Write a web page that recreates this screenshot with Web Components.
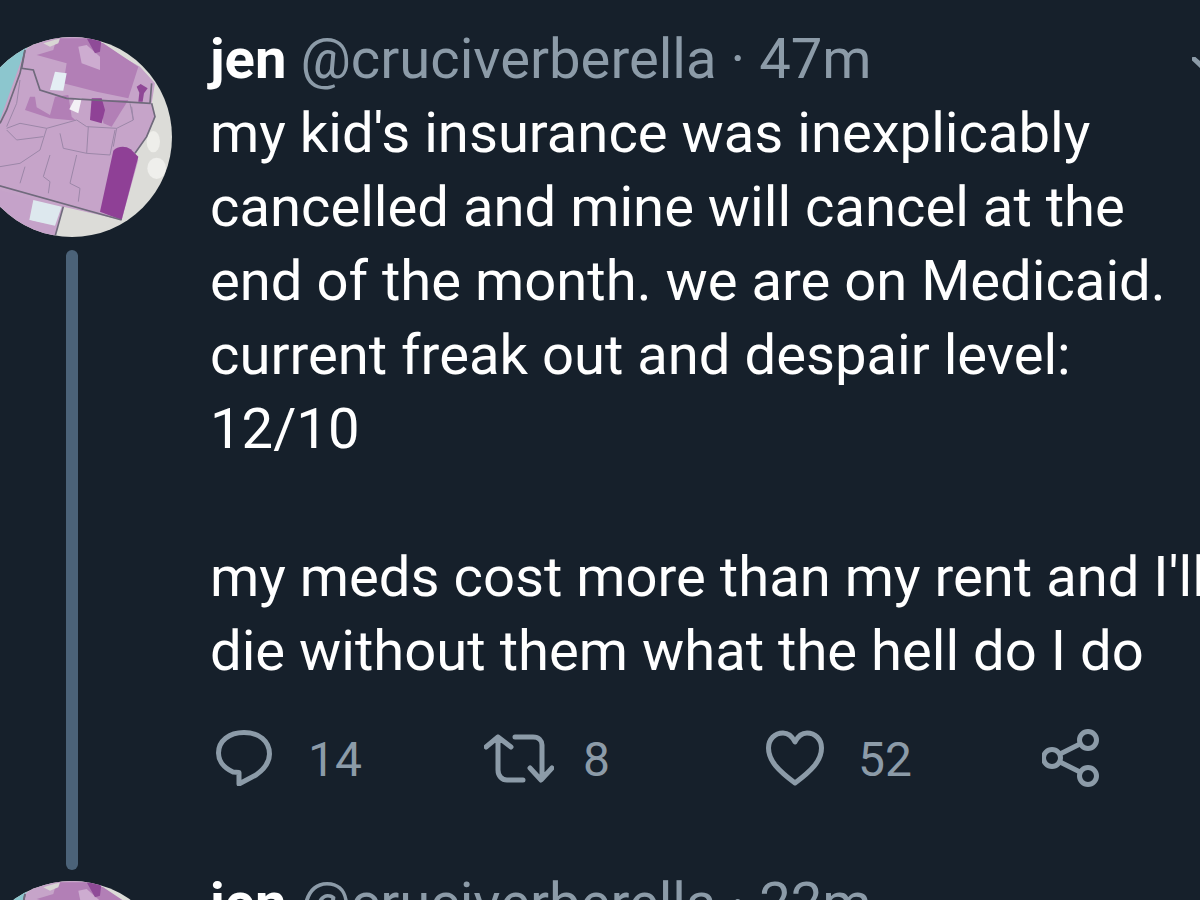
<!DOCTYPE html>
<html>
<head>
<meta charset="utf-8">
<title>thread</title>
<style>
  html, body { margin: 0; height: 100%; overflow: hidden; background: #16202b; }
  body { padding-top: 37px; box-sizing: border-box; font-family: Roboto, "Liberation Sans", sans-serif; }
</style>
</head>
<body>
<tweet-item>
  <span slot="name">jen</span>
  <span slot="handle">@cruciverberella</span>
  <span slot="time">47m</span>
  <span slot="text">my kid's insurance was inexplicably
cancelled and mine will cancel at the
end of the month. we are on Medicaid.
current freak out and despair level:
12/10

my meds cost more than my rent and I'll
die without them what the hell do I do</span>
  <tweet-action slot="actions" icon="reply" count="14"></tweet-action>
  <tweet-action slot="actions" icon="retweet" count="8"></tweet-action>
  <tweet-action slot="actions" icon="like" count="52"></tweet-action>
  <tweet-action slot="actions" icon="share"></tweet-action>
</tweet-item>
<tweet-item>
  <span slot="name">jen</span>
  <span slot="handle">@cruciverberella</span>
  <span slot="time">22m</span>
</tweet-item>

<script>
const avatarTemplate = document.createElement("template");
avatarTemplate.innerHTML = `
  <style>
    :host { display: block; width: 200px; height: 200px; flex: none; }
    svg { display: block; width: 200px; height: 200px; }
  </style>
  <svg viewBox="-28 37 200 200">
    <defs>
      <clipPath id="round"><circle cx="72" cy="137" r="100"/></clipPath>
      <filter id="soft"><feGaussianBlur stdDeviation="0.5"/></filter>
    </defs>
    <g clip-path="url(#round)">
      <rect x="-28" y="37" width="200" height="200" fill="#dcdcd8"/>
      <!-- map is traced in 3x crop coordinates -->
      <g transform="translate(0 20) scale(.3333)" filter="url(#soft)">
        <path d="M-90 50H90L60 160 20 270 0 310-90 400Z" fill="#8cc6ce"/>
        <ellipse cx="470" cy="445" rx="28" ry="32" fill="#efefec"/>
        <ellipse cx="460" cy="365" rx="20" ry="32" fill="#eeeeea"/>
        <path d="M75 90 130 50H260L420 140 465 190 455 250 465 290 440 350 405 400 415 420 365 600 190 560 165 650H-90V280L0 300Z" fill="#c6a4c9"/>
        <path d="M110 105 160 90 170 55H260L310 70 415 140 385 235 290 215 190 190 200 130Z" fill="#b27fb6"/>
        <path d="M235 80 260 75 300 110 300 150 245 130Z" fill="#cdacd0"/>
        <path d="M130 70 180 55 175 70 150 80Z" fill="#d8d6d4"/>
        <path d="M260 55H305L300 95 285 100Z" fill="#8f4c98"/>
        <path d="M165 155 200 160 190 212 150 210Z" fill="#e4eef4"/>
        <path d="M410 200 422 192 443 205 432 220 428 245 415 245 418 218Z" fill="#8f4796"/>
        <path d="M305 240H385L360 280 335 320 310 310Z" fill="#b27fb6"/>
        <path d="M275 235 305 235 315 270 305 310 270 300Z" fill="#8f4296"/>
        <path d="M90 230 105 230 110 262 150 285 165 230 205 225 215 290 228 302 150 295 75 270Z" fill="#b27fb6"/>
        <path d="M225 235 245 235 235 280 208 268Z" fill="#f3f1f5"/>
        <path d="M340 392C350 380 375 375 392 388L415 410 365 600 300 575Z" fill="#8f4196"/>
        <path d="M100 540 185 560 165 617 88 600Z" fill="#dde8ee"/>
        <path d="M0 565-20 590 0 640 85 650 160 650 165 620 85 600 95 540 0 510Z" fill="#c5a2c9"/>
        <g fill="none" stroke="#9c87a8" stroke-width="3">
          <path d="M20 325 60 310 140 325 230 300 260 320 350 325 400 300 395 260"/>
          <path d="M140 325 120 390 60 430 0 440"/>
          <path d="M180 340 190 385 260 400 265 320"/>
          <path d="M260 400 330 405 345 330"/>
          <path d="M150 405 130 470 150 485 145 520"/>
          <path d="M230 405 210 490 240 505 235 545"/>
          <path d="M75 440 60 490"/>
          <path d="M20 330 50 360 130 350"/>
          <path d="M60 180 50 250 20 320"/>
          <path d="M350 325 340 380"/>
          <path d="M400 300 390 250"/>
        </g>
        <g fill="none" stroke="#6f6a7c" stroke-width="5">
          <path d="M75 90 65 145 100 150 120 210 200 235 450 250 455 190"/>
          <path d="M455 250 465 290 440 350 405 400"/>
          <path d="M-10 495 365 600"/>
          <path d="M190 560 165 650"/>
          <path d="M75 90 60 160 20 270 0 310"/>
        </g>
      </g>
    </g>
  </svg>
`;

class TweetAvatar extends HTMLElement {
  constructor() {
    super();
    this.attachShadow({ mode: "open" }).appendChild(avatarTemplate.content.cloneNode(true));
  }
}
customElements.define("tweet-avatar", TweetAvatar);

// icon boxes are page pixels, strokes from the crops
const ICONS = {
  reply: `<svg width="56" height="56" viewBox="0 0 56 56"><path d="M17 42C8 38 2.500 31 2.500 23 2.500 11 13 2.500 28 2.500S53.500 11 53.500 24C53.500 33 47 40 40 45L23 54V42.500Z"/></svg>`,
  retweet: `<svg width="70" height="56" viewBox="0 0 70 56"><path d="M14 7V40C14 46 18 50 23 50H39M2 17 14 7 27 17M31 7H49C55 7 58 11 58 15V48M46 38 57 50 68 38"/></svg>`,
  like: `<svg width="58" height="56" viewBox="0 0 58 56"><path d="M29 53C13 41 2.500 31 2.500 18 2.500 9 9 3 17 3 22 3 26 6 29 12 32 6 36 3 41 3 49 3 55.500 9 55.500 18 55.500 31 45 41 29 53Z"/></svg>`,
  share: `<svg width="58" height="58" viewBox="0 0 58 58"><circle cx="46" cy="11" r="8.500"/><circle cx="10" cy="29" r="8.500"/><circle cx="46" cy="47" r="8.500"/><path d="M18 25 38 15M18 33 38 43"/></svg>`
};

const actionTemplate = document.createElement("template");
actionTemplate.innerHTML = `
  <style>
    :host { display: flex; align-items: center; color: #8c9ba8; font-size: 48px; line-height: 60px; height: 56px; }
    .icon { display: flex; width: 92px; }
    :host([icon="retweet"]) .icon { width: 99px; }
    .count { margin-top: 3px; }
    svg { fill: none; stroke: #8c9ba8; stroke-width: 5; stroke-linejoin: round; stroke-linecap: round; display: block; }
  </style>
  <span class="icon"></span><span class="count"></span>
`;

class TweetAction extends HTMLElement {
  constructor() {
    super();
    this.attachShadow({ mode: "open" }).appendChild(actionTemplate.content.cloneNode(true));
  }

  connectedCallback() {
    this.shadowRoot.querySelector(".icon").innerHTML = ICONS[this.getAttribute("icon")];
    this.shadowRoot.querySelector(".count").textContent = this.getAttribute("count") || "";
  }
}
customElements.define("tweet-action", TweetAction);

const itemTemplate = document.createElement("template");
itemTemplate.innerHTML = `
  <style>
    :host { display: flex; margin-left: -28px; width: 1400px; gap: 38px; }
    .side { display: flex; flex-direction: column; align-items: center; width: 200px; flex: none; padding-bottom: 11px; }
    .line { flex: 1; width: 12px; margin-top: 13px; border-radius: 6px; background: #4b6278; }
    .main { margin-top: -15px; padding-bottom: 95px; flex: 1; position: relative; }
    .head { font-size: 56.2px; line-height: 74px; white-space: pre; color: #8c9ba8; }
    .name { color: #fff; font-weight: 700; }
    .body { font-size: 56.2px; line-height: 74px; white-space: pre; color: #fff; }
    .actions { display: grid; grid-template-columns: 268px 282px 276px auto; margin: 42px 0 0 6px; }
    .menu { position: absolute; left: 982px; top: 35px; width: 30px; height: 20px; }
    .menu path { fill: none; stroke: #8c9ba8; stroke-width: 5; stroke-linecap: round; }
  </style>
  <div class="side"><tweet-avatar></tweet-avatar><div class="line"></div></div>
  <div class="main">
    <div class="head"><span class="name"><slot name="name"></slot></span> <slot name="handle"></slot> · <slot name="time"></slot></div>
    <div class="body"><slot name="text"></slot></div>
    <div class="actions"><slot name="actions"></slot></div>
    <svg class="menu" viewBox="0 0 30 20"><path d="M2 2 14 13 26 2"/></svg>
  </div>
`;

class TweetItem extends HTMLElement {
  constructor() {
    super();
    this.attachShadow({ mode: "open" }).appendChild(itemTemplate.content.cloneNode(true));
  }
}
customElements.define("tweet-item", TweetItem);
</script>
</body>
</html>
